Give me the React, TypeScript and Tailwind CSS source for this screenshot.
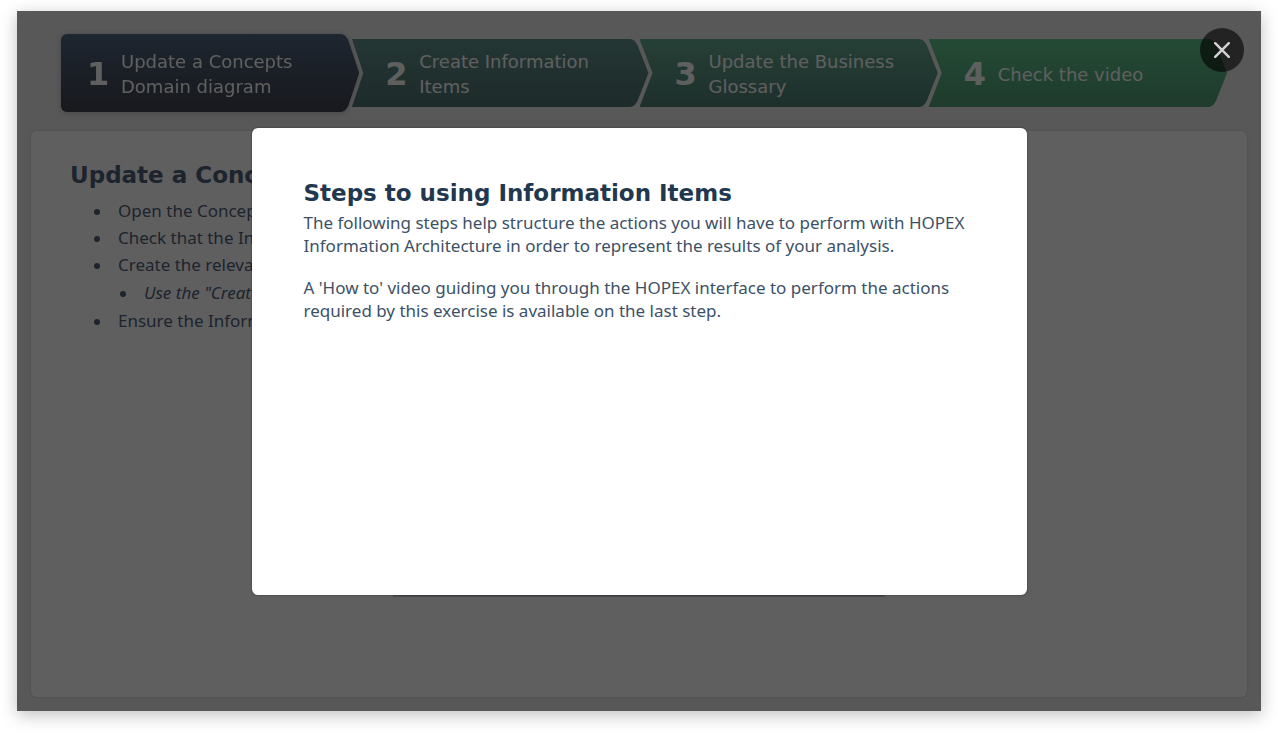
import { useState } from "react";

type Step = { label: string; gradient: string; active?: boolean };

const steps: Step[] = [
  { label: "Update a Concepts Domain diagram", gradient: "from-[#506681] to-[#40434e]", active: true },
  { label: "Create Information Items", gradient: "from-[#61938b] to-[#507373]" },
  { label: "Update the Business Glossary", gradient: "from-[#66ab93] to-[#508076]" },
  { label: "Check the video", gradient: "from-[#60c68e] to-[#539e76]" },
];

const layers = ["z-40", "z-30", "z-20", "z-10"];

const arrow =
  "[clip-path:polygon(0_0,calc(100%_-_18px)_0,calc(100%_-_15px)_1px,calc(100%_-_13px)_3px,calc(100%_-_11px)_6px,100%_50%,calc(100%_-_11px)_calc(100%_-_6px),calc(100%_-_13px)_calc(100%_-_3px),calc(100%_-_15px)_calc(100%_-_1px),calc(100%_-_18px)_100%,0_100%)]";
const arrowEdge =
  "[clip-path:polygon(0_0,calc(100%_-_13px)_0,100%_50%,calc(100%_-_13px)_100%,0_100%)]";

const bullet =
  "before:mr-[18px] before:-ml-6 before:inline-block before:size-[6px] before:rounded-full before:bg-[#50617a] before:align-middle";

function StepItem({ step, index }: { step: Step; index: number }) {
  const last = index === steps.length - 1;
  return (
    <li className={`relative min-w-0 flex-1 ${layers[index]} ${index > 0 ? "-ml-[9px]" : ""}`}>
      {!last && (
        <span aria-hidden="true" className={`absolute inset-y-0 -right-[4px] w-8 bg-[#ececec] ${arrowEdge}`} />
      )}
      <div className={step.active ? "drop-shadow-[0_1px_3px_rgba(0,0,0,0.2)]" : ""}>
        <button
          type="button"
          aria-current={step.active ? "step" : undefined}
          className={`flex w-full items-center bg-linear-to-b pt-[2px] pr-8 text-left text-white ${step.gradient} ${arrow} ${
            step.active ? "h-[78px] rounded-l-md pl-[26px]" : "h-[68px] pl-[35px]"
          }`}
        >
          <span className="w-[34px] shrink-0 text-[32px] leading-8 font-bold">{index + 1}</span>
          <span className="text-[18px] leading-[25px]">{step.label}</span>
        </button>
      </div>
    </li>
  );
}

export default function App() {
  const [open, setOpen] = useState(true);
  return (
    <div className="flex min-h-screen bg-white px-[17px] pt-[11px] pb-[23px] font-['DejaVu_Sans',sans-serif] text-[#50617a]">
      <main className="relative flex flex-1 flex-col bg-[#ececec] px-[14px] pt-[23px] pb-[14px] shadow-[0_4px_16px_rgba(0,0,0,0.25)]">
        <ol className="flex items-center pr-[20px] pl-[30px]">
          {steps.map((step, i) => (
            <StepItem key={step.label} step={step} index={i} />
          ))}
        </ol>

        <section className="mt-[19px] flex flex-1 flex-col rounded-md bg-white px-[39px] pt-[28px] shadow-[0_0_3px_rgba(0,0,0,0.15)]">
          <h1 className="text-[23px] leading-8 font-bold">Update a Concepts</h1>
          <ul className="mt-[6px] pl-12 font-['Noto_Sans',sans-serif] text-[17px] leading-[27px]">
            <li className={bullet}>Open the Concepts</li>
            <li className={bullet}>Check that the Info</li>
            <li className={bullet}>
              Create the relevant
              <ul className="pl-[26px] leading-[29px] italic">
                <li className={bullet}>Use the "Create"</li>
              </ul>
            </li>
            <li className={bullet}>Ensure the Information</li>
          </ul>
          <div className="mx-auto mt-auto mb-[100px] h-[200px] w-full max-w-[492px] bg-[#cccdd6]" />
        </section>

        {open && (
          <div className="absolute inset-0 z-50 flex items-center justify-center bg-black/[0.627]">
            <div
              role="dialog"
              aria-modal="true"
              aria-labelledby="dialog-title"
              className="min-h-[467px] w-full max-w-[775px] rounded-md bg-white px-[52px] py-[49px] text-[#3d5166] shadow-[0_0_2px_rgba(0,0,0,0.5)]"
            >
              <h2 id="dialog-title" className="text-[23px] leading-8 font-bold text-[#22384f]">
                Steps to using Information Items
              </h2>
              <div className="mt-[2px] flex flex-col gap-[19px] font-['Noto_Sans',sans-serif] text-[17px] leading-[23px]">
                <p>
                  The following steps help structure the actions you will have to perform with HOPEX Information
                  Architecture in order to represent the results of your analysis.
                </p>
                <p>
                  A 'How to' video guiding you through the HOPEX interface to perform the actions required by this
                  exercise is available on the last step.
                </p>
              </div>
            </div>
            <button
              type="button"
              aria-label="Close"
              onClick={() => setOpen(false)}
              className="absolute top-[17px] right-[17px] flex size-[44px] items-center justify-center rounded-full bg-black/60 text-[#d4d4d4]"
            >
              <svg viewBox="0 0 16 16" className="size-4" fill="none" stroke="currentColor" strokeWidth="2.4" strokeLinecap="round">
                <path d="M1.2 1.2 14.8 14.8M14.8 1.2 1.2 14.8" />
              </svg>
            </button>
          </div>
        )}
      </main>
    </div>
  );
}
